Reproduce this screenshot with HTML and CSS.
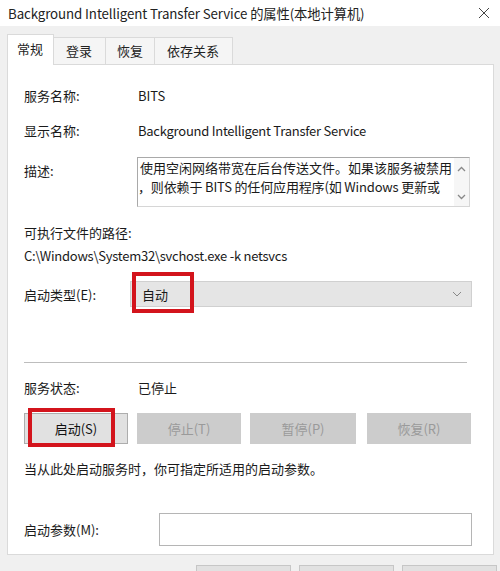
FILE: index.html
```html
<!DOCTYPE html>
<html lang="zh-CN">
<head>
<meta charset="utf-8">
<title>BITS 属性</title>
<link rel="stylesheet" href="styles.css">
</head>
<body>
<div class="window">
  <div class="titlebar">
    <span class="title">Background Intelligent Transfer Service 的属性(本地计算机)</span>
    <svg class="close" width="12" height="12" viewBox="0 0 12 12"><path d="M1 1L11 11M11 1L1 11" stroke="#444" stroke-width="1" fill="none"/></svg>
  </div>
  <div class="tabs">
    <div class="tab active">常规</div>
    <div class="tab">登录</div>
    <div class="tab">恢复</div>
    <div class="tab">依存关系</div>
  </div>
  <div class="panel">
    <div class="row r1"><span class="label">服务名称:</span><span class="value">BITS</span></div>
    <div class="row r2"><span class="label">显示名称:</span><span class="value latin">Background Intelligent Transfer Service</span></div>
    <div class="desc-row">
      <span class="label desc-label">描述:</span>
      <div class="textarea">
        <div class="ta-text">
          <div class="ta-line">使用空闲网络带宽在后台传送文件。如果该服务被禁用</div>
          <div class="ta-line line2">，则依赖于 BITS 的任何应用程序(如 Windows 更新或</div>
        </div>
        <div class="scroll">
          <svg width="9" height="6" viewBox="0 0 9 6"><path d="M1 5L4.5 1.5L8 5" stroke="#888" stroke-width="1.3" fill="none"/></svg>
          <svg width="9" height="6" viewBox="0 0 9 6"><path d="M1 1L4.5 4.5L8 1" stroke="#888" stroke-width="1.3" fill="none"/></svg>
        </div>
      </div>
    </div>
    <div class="path-label">可执行文件的路径:</div>
    <div class="path latin">C:\Windows\System32\svchost.exe -k netsvcs</div>
    <div class="type-row">
      <span class="label type-label">启动类型(E):</span>
      <div class="select">
        <span>自动</span>
        <svg width="10" height="6" viewBox="0 0 10 6"><path d="M1 1L5 5L9 1" stroke="#888" stroke-width="1" fill="none"/></svg>
        <div class="mark mark-select"></div>
      </div>
    </div>
    <div class="divider"></div>
    <div class="row r-status"><span class="label">服务状态:</span><span class="value">已停止</span></div>
    <div class="buttons">
      <div class="btn primary">启动(S)<div class="mark mark-btn"></div></div>
      <div class="btn disabled">停止(T)</div>
      <div class="btn disabled">暂停(P)</div>
      <div class="btn disabled">恢复(R)</div>
    </div>
    <div class="hint">当从此处启动服务时，你可指定所适用的启动参数。</div>
    <div class="param-row">
      <span class="label param-label">启动参数(M):</span>
      <div class="input"></div>
    </div>
  </div>
  <div class="footer">
    <div class="fbtn"></div>
    <div class="fbtn"></div>
    <div class="fbtn"></div>
  </div>
</div>
</body>
</html>
```

FILE: styles.css
```css
* { box-sizing: border-box; }
html, body { margin: 0; padding: 0; }
body {
  width: 500px;
  height: 571px;
  overflow: hidden;
  background: #f0f0f0;
  font-family: "Noto Sans CJK SC", "Microsoft YaHei", sans-serif;
  font-size: 13px;
  color: #1a1a1a;
}
.window { width: 500px; height: 571px; }
.titlebar {
  height: 26px;
  background: #fff;
  display: flex;
  align-items: center;
  justify-content: space-between;
  padding: 0 10px 0 8px;
}
.title { font-size: 13.3px; color: #222; letter-spacing: -0.1px; }
.latin { letter-spacing: -0.25px; }
.tabs {
  display: flex;
  align-items: flex-end;
  height: 38px;
  padding: 7px 0 0 7px;
}
.tab {
  height: 27px;
  line-height: 25px;
  padding: 0 9px;
  background: #f5f5f5;
  border: 1px solid #dadada;
  border-bottom: none;
  border-left: none;
  color: #222;
}
.tab:nth-child(2) { padding-left: 12px; padding-right: 13px; }
.tab:nth-child(3) { padding-left: 11px; padding-right: 11px; }
.tab:nth-child(4) { padding-left: 12px; padding-right: 13px; }
.tab.active {
  height: 31px;
  line-height: 27px;
  background: #fff;
  border: 1px solid #dadada;
  border-bottom: none;
  padding: 0 10px 0 9px;
  position: relative;
  z-index: 1;
  margin-bottom: -1px;
}
.panel {
  margin: 0 6px 0 7px;
  height: 491px;
  background: #fff;
  border: 1px solid #dadada;
  padding: 20px 0 0 16px;
  display: flex;
  flex-direction: column;
}
.row { display: flex; align-items: center; height: 20px; }
.label { display: inline-block; }
.row .label { width: 114px; }
.r2 { margin-top: 15px; }
.desc-row { display: flex; margin-top: 17px; height: 50px; }
.desc-label { width: 113px; padding-top: 4px; line-height: 20px; }
.textarea {
  width: 333px;
  height: 50px;
  border: 1px solid #a9a9a9;
  border-right-color: #d6d6d6;
  border-bottom-color: #d6d6d6;
  display: flex;
  background: #fff;
}
.ta-text {
  flex: 1;
  min-width: 0;
  padding: 0 0 0 2px;
  line-height: 19px;
}
.ta-line { white-space: nowrap; height: 19px; }
.line2 { letter-spacing: -0.15px; margin-left: -2px; }
.scroll {
  width: 15px;
  flex: none;
  display: flex;
  flex-direction: column;
  justify-content: space-between;
  align-items: center;
  padding: 8px 0 6px;
  background: #f6f6f6;
}
.path-label { margin-top: 16px; height: 20px; line-height: 20px; }
.path { margin-top: 3px; height: 20px; line-height: 20px; }
.type-row { display: flex; align-items: center; margin-top: 15px; height: 26px; }
.type-label { width: 106px; }
.select {
  position: relative;
  width: 342px;
  height: 26px;
  background: #e5e5e5;
  border: 1px solid #d0d0d0;
  display: flex;
  align-items: center;
  justify-content: space-between;
  padding: 0 9px 0 11px;
}
.mark {
  position: absolute;
  border: 4px solid #d3141c;
  pointer-events: none;
}
.mark-select { left: 1px; top: -10px; width: 62px; height: 41px; }
.divider {
  margin-top: 55px;
  width: 443px;
  height: 1px;
  background: #bdbdbd;
}
.r-status { margin-top: 14px; }
.buttons { display: flex; margin-top: 16px; height: 31px; }
.btn {
  width: 104px;
  height: 31px;
  display: flex;
  align-items: center;
  justify-content: center;
  margin-right: 9px;
  position: relative;
}
.btn:nth-child(3) { width: 106px; margin-right: 11px; }
.btn.primary { background: #e1e1e1; border: 1px solid #adadad; color: #111; }
.btn.disabled { background: #cccccc; color: #9a9a9a; }
.mark-btn { left: 3px; top: -6px; width: 87px; height: 39px; }
.hint { margin-top: 15px; height: 20px; line-height: 20px; }
.param-row { display: flex; align-items: center; margin-top: 34px; height: 33px; }
.param-label { width: 135px; }
.input {
  width: 313px;
  height: 33px;
  border: 1px solid #b5b5b5;
  background: #fff;
}
.footer {
  display: flex;
  justify-content: flex-end;
  gap: 8px;
  padding: 10px 3px 0 0;
}
.fbtn {
  width: 95px;
  height: 26px;
  background: #e1e1e1;
  border: 1px solid #c6c6c6;
}
```
